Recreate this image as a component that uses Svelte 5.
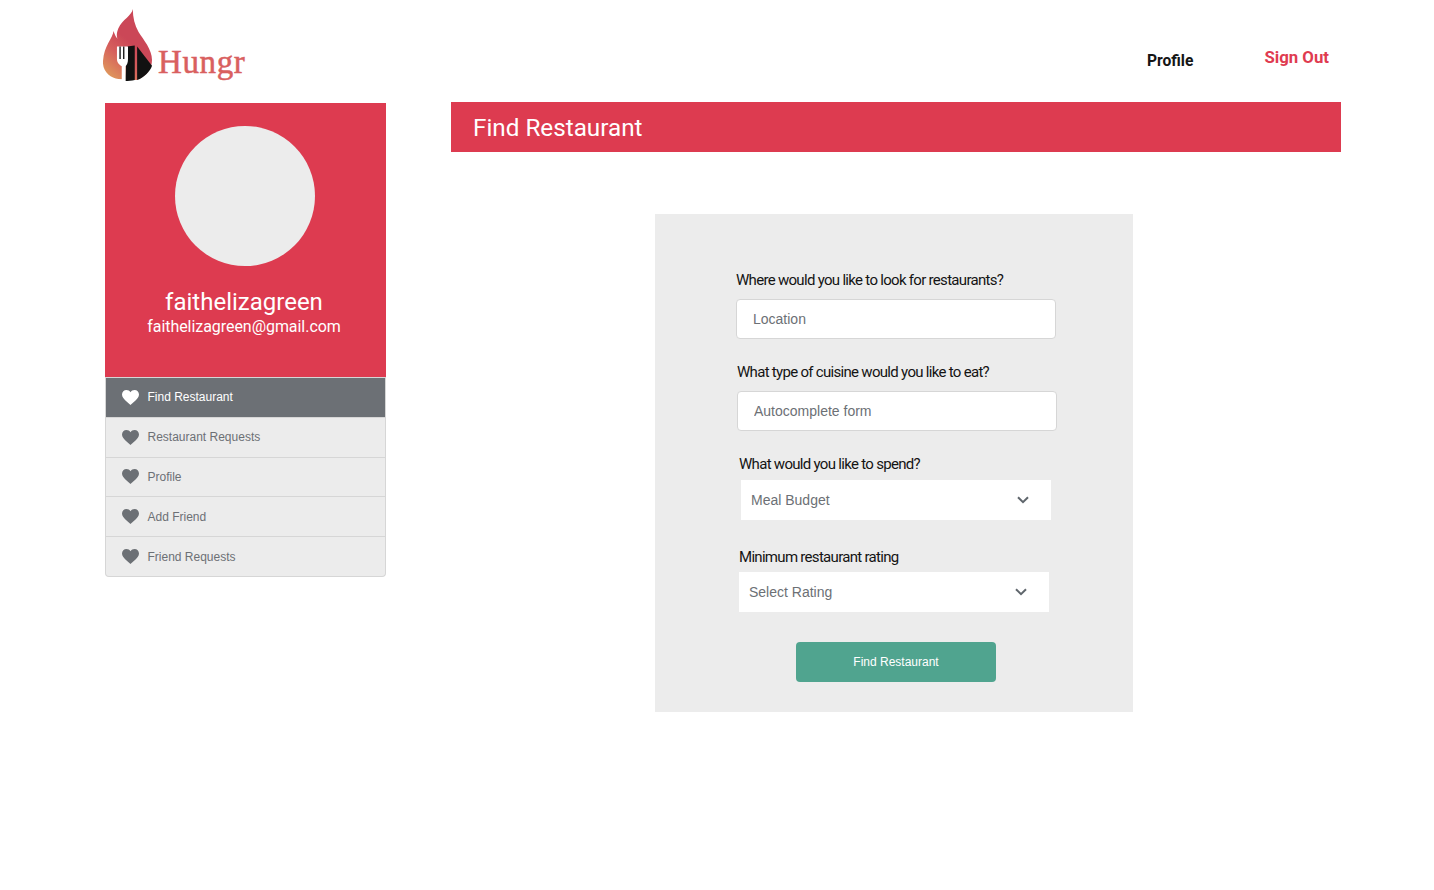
<script>
    const navItems = [
        { label: "Find Restaurant", active: true },
        { label: "Restaurant Requests" },
        { label: "Profile" },
        { label: "Add Friend" },
        { label: "Friend Requests" }
    ];
</script>

<div class="page">
    <header class="topbar">
        <a class="logo" href="#top">
            <svg width="50" height="73" viewBox="0 0 52 76">
                <defs>
                    <linearGradient id="flame" x1="0.1" y1="1" x2="0.45" y2="0.4">
                        <stop offset="0" stop-color="#e0a05c" />
                        <stop offset="0.6" stop-color="#d65f5c" />
                        <stop offset="1" stop-color="#cb4757" />
                    </linearGradient>
                </defs>
                <path fill="url(#flame)" d="M31 0 C30 7 20 11 16 20 C14 25 14 28 15 31 C13 29 12 26 11 23 C10 31 1 38 0 54 C-1 65 8 72 16 73 L35 74 C45 70 51 62 51 53 C51 42 42 32 37 24 C33 17 31 9 31 0 Z" />
                <path fill="#111" d="M25 39 L33 38 L33 74 C30 75 26 75 23 75 Z" />
                <path fill="#111" d="M35.5 39 L51 59 C49 65 43 71 35.5 74 Z" />
                <path fill="#fff" d="M14.5 39 H26 V52 C26 56 25 58 23.5 59.5 V75 H19.5 V59.5 C17 58 14.5 56 14.5 52 Z" />
                <path fill="#222" d="M17 39 h1.5 v13 h-1.5 Z M20.8 39 h1.5 v13 h-1.5 Z" />
            </svg>
            <span class="wordmark">Hungr</span>
        </a>
        <nav class="topnav">
            <a class="nav-profile" href="#top">Profile</a>
            <a class="nav-signout" href="#top">Sign Out</a>
        </nav>
    </header>

    <div class="content">
        <aside class="sidebar">
            <div class="profile-card">
                <div class="avatar"></div>
                <div class="username">faithelizagreen</div>
                <div class="email">faithelizagreen@gmail.com</div>
            </div>
            <ul class="side-list">
                {#each navItems as item}
                    <li class:active={item.active}>
                        <svg width="17" height="15" viewBox="0 0 17 15">
                            <path fill="currentColor" d="M8.5 15 C7 13.4 0 9 0 4.6 C0 1.8 2 0 4.4 0 C6.2 0 7.6 0.9 8.5 2.3 C9.4 0.9 10.8 0 12.6 0 C15 0 17 1.8 17 4.6 C17 9 10 13.4 8.5 15 Z" />
                        </svg>
                        <span>{item.label}</span>
                    </li>
                {/each}
            </ul>
        </aside>

        <main class="main">
            <h1 class="title-bar">Find Restaurant</h1>
            <form class="panel">
                <div class="field field-a">
                    <label for="location">Where would you like to look for restaurants?</label>
                    <input id="location" type="text" placeholder="Location" />
                </div>
                <div class="field field-b">
                    <label for="cuisine">What type of cuisine would you like to eat?</label>
                    <input id="cuisine" type="text" placeholder="Autocomplete form" />
                </div>
                <div class="field field-c">
                    <div class="label">What would you like to spend?</div>
                    <div class="select select-c">
                        <span>Meal Budget</span>
                        <svg width="12" height="8" viewBox="0 0 12 8"><path d="M1 1.2 L6 6.2 L11 1.2" fill="none" stroke="#5f666c" stroke-width="2" /></svg>
                    </div>
                </div>
                <div class="field field-d">
                    <div class="label">Minimum restaurant rating</div>
                    <div class="select">
                        <span>Select Rating</span>
                        <svg width="12" height="8" viewBox="0 0 12 8"><path d="M1 1.2 L6 6.2 L11 1.2" fill="none" stroke="#5f666c" stroke-width="2" /></svg>
                    </div>
                </div>
                <button type="button" class="submit">Find Restaurant</button>
            </form>
        </main>
    </div>
</div>

<style>
    :global(body) {
        background: #fff;
        font-family: "Roboto", "Liberation Sans", sans-serif;
    }

    .page {
        width: 1434px;
        height: 890px;
        overflow: hidden;
    }

    .topbar {
        display: flex;
        justify-content: space-between;
        height: 102px;
        padding: 9px 105px 0 103px;
        box-sizing: border-box;
    }

    .logo {
        display: flex;
        align-items: flex-start;
        text-decoration: none;
    }

    .wordmark {
        margin: 32px 0 0 5px;
        font-family: "Liberation Serif", serif;
        font-size: 33px;
        line-height: 42px;
        letter-spacing: 0.6px;
        color: #d9605f;
        -webkit-text-stroke: 0.5px #d9605f;
    }

    .topnav {
        display: flex;
        align-items: flex-start;
        gap: 71px;
        font-weight: 700;
    }

    .topnav a {
        text-decoration: none;
    }

    .nav-profile {
        margin-top: 43px;
        font-size: 15.6px;
        color: #151515;
    }

    .nav-signout {
        margin-top: 38px;
        font-size: 16.8px;
        color: #df3b50;
    }

    .content {
        display: flex;
        align-items: flex-start;
        padding-left: 105px;
        gap: 65px;
    }

    .sidebar {
        width: 281px;
        margin-top: 1px;
    }

    .profile-card {
        height: 274px;
        padding-top: 23px;
        box-sizing: border-box;
        background: #dd3b50;
        color: #fff;
        text-align: center;
    }

    .avatar {
        width: 140px;
        height: 140px;
        margin: 0 0 20px 70px;
        border-radius: 50%;
        background: #ececec;
    }

    .username {
        margin-right: 3px;
        font-size: 24px;
        line-height: 32px;
    }

    .email {
        margin-right: 3px;
        font-size: 16px;
        line-height: 18px;
        letter-spacing: -0.05px;
    }

    .side-list {
        margin: 0;
        padding: 0;
        list-style: none;
        background: #ececec;
        border: 1px solid #d6d6d6;
        border-top: 0;
        border-radius: 0 0 4px 4px;
        overflow: hidden;
    }

    .side-list li {
        display: flex;
        align-items: center;
        gap: 8.5px;
        height: 39.8px;
        padding-left: 16px;
        box-sizing: border-box;
        border-top: 1px solid #d6d6d6;
        font-family: "Liberation Sans", sans-serif;
        font-size: 12px;
        color: #6c7075;
    }

    .side-list li.active {
        background: #6c7075;
        color: #fff;
    }

    .main {
        width: 890px;
    }

    .title-bar {
        height: 50px;
        margin: 0;
        padding-left: 22px;
        background: #dd3b50;
        color: #fff;
        font-size: 24.25px;
        font-weight: 400;
        line-height: 52px;
    }

    .panel {
        display: flex;
        flex-direction: column;
        width: 478px;
        height: 498px;
        margin: 62px 0 0 204px;
        padding-top: 56px;
        box-sizing: border-box;
        background: #ececec;
    }

    .field {
        display: flex;
        flex-direction: column;
        height: 92px;
    }

    .field label, .label {
        margin-bottom: 9px;
        font-size: 15px;
        line-height: 20px;
        letter-spacing: -0.7px;
        color: #141414;
    }

    .label {
        margin-bottom: 7px;
    }

    .field-a { margin-left: 81px; }
    .field-b { margin-left: 82px; }
    .field-c { margin-left: 84px; height: 93px; }
    .field-d { margin-left: 84px; }

    input {
        width: 320px;
        height: 40px;
        padding: 0 16px;
        box-sizing: border-box;
        border: 1px solid #d6d6d6;
        border-radius: 4px;
        background: #fff;
        font-family: "Liberation Sans", sans-serif;
        font-size: 14px;
        outline: none;
    }

    input::placeholder {
        color: #6c7075;
        opacity: 1;
    }

    .select {
        display: flex;
        align-items: center;
        justify-content: space-between;
        width: 310px;
        height: 40px;
        margin-top: -1px;
        padding: 0 22px 0 10px;
        box-sizing: border-box;
        background: #fff;
        font-family: "Liberation Sans", sans-serif;
        font-size: 14px;
        color: #6c7075;
    }

    .select-c {
        margin-left: 2px;
    }

    .field-d .select {
        margin-top: -2px;
    }

    .submit {
        align-self: flex-start;
        width: 200px;
        height: 40px;
        margin: 3px 0 0 141px;
        border: 0;
        border-radius: 4px;
        background: #50a48f;
        color: #fff;
        font-family: "Liberation Sans", sans-serif;
        font-size: 12px;
    }
</style>
